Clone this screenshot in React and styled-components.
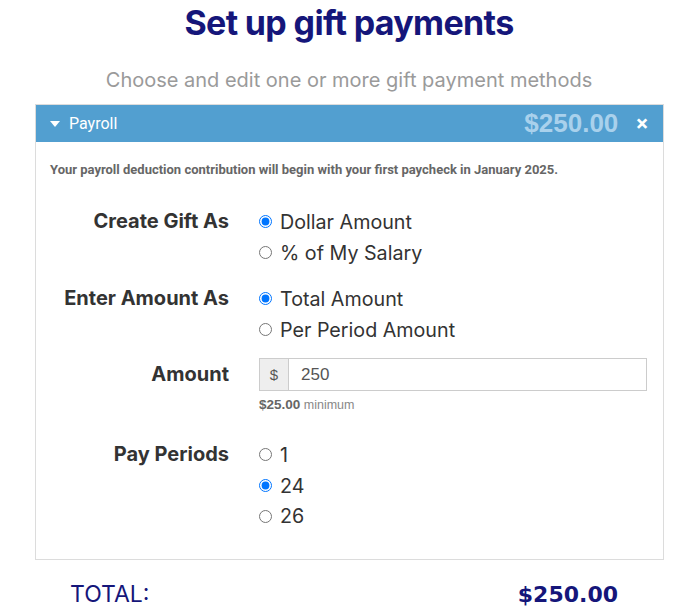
import React from "react";
import styled, { createGlobalStyle } from "styled-components";

const Global = createGlobalStyle`
  html, body { margin: 0; padding: 0; background: #fff; }
  body { font-family: Inter, "Noto Sans", sans-serif; }
`;

const Page = styled.div`
  width: 682px;
  padding-top: 2px;
`;

const Title = styled.h1`
  margin: 0;
  text-align: center;
  padding-left: 16px;
  font-family: Inter, sans-serif;
  font-weight: 700;
  font-size: 34px;
  line-height: 42px;
  letter-spacing: -0.65px;
  color: #15167a;
`;

const Subtitle = styled.p`
  margin: 24px 0 0;
  text-align: center;
  padding-left: 16px;
  font-family: Inter, sans-serif;
  font-size: 20px;
  line-height: 24px;
  color: #9a9a9a;
`;

const Panel = styled.section`
  margin: 12px 0 0 35px;
  width: 629px;
  box-sizing: border-box;
  border: 1px solid #dcdcdc;
`;

const PanelHeader = styled.div`
  display: flex;
  align-items: center;
  height: 37px;
  background: #529fd0;
  padding: 0 15px 0 14px;
  font-family: Roboto, sans-serif;
`;

const Caret = styled.span`
  width: 0;
  height: 0;
  border-left: 5px solid transparent;
  border-right: 5px solid transparent;
  border-top: 6px solid #fff;
  margin-right: 9px;
`;

const HeaderTitle = styled.span`
  flex: 1;
  color: #fff;
  font-size: 16px;
`;

const HeaderAmount = styled.span`
  color: #a9d1ec;
  font-family: "Liberation Sans", Arial, sans-serif;
  font-weight: 700;
  font-size: 26px;
  margin-right: 18px;
`;

const Close = styled.span`
  color: #fff;
  font-size: 22px;
  font-weight: 700;
  line-height: 1;
`;

const PanelBody = styled.div`
  padding: 20px 14px 28px;
`;

const Note = styled.p`
  margin: 0 0 29px;
  font-family: Roboto, sans-serif;
  font-weight: 700;
  font-size: 13px;
  line-height: 15px;
  color: #666;
`;

const Form = styled.div`
  display: grid;
  grid-template-columns: 179px 1fr;
  column-gap: 30px;
  row-gap: 15px;
`;

const Label = styled.div`
  text-align: right;
  font-family: Inter, sans-serif;
  font-weight: 700;
  font-size: 20px;
  line-height: ${(p) => p.$lh || 31}px;
  color: #333;
  margin-top: ${(p) => p.$mt || 0}px;
`;

const Options = styled.div`
  display: flex;
  flex-direction: column;
`;

const Option = styled.label`
  display: flex;
  align-items: center;
  height: 31px;
  font-family: Inter, sans-serif;
  font-size: 19.7px;
  color: #333;
  &:nth-child(3) { height: 30px; }
`;

const Radio = styled.input`
  margin: 0 8px 0 0;
  width: 13px;
  height: 13px;
`;

const AmountField = styled.div`
  margin-top: -2px;
`;

const InputGroup = styled.div`
  display: flex;
  height: 33px;
  width: 388px;
  box-sizing: border-box;
  border: 1px solid #ccc;
  font-family: "Liberation Sans", Arial, sans-serif;
  font-size: 17px;
`;

const Addon = styled.span`
  width: 28px;
  background: #eee;
  border-right: 1px solid #ccc;
  display: flex;
  align-items: center;
  justify-content: center;
  color: #555;
  font-size: 15px;
`;

const InputValue = styled.span`
  display: flex;
  align-items: center;
  padding-left: 12px;
  color: #555;
`;

const Hint = styled.div`
  margin-top: 7px;
  font-family: "Liberation Sans", Arial, sans-serif;
  font-size: 12.5px;
  line-height: 14px;
  color: #888;
  b { color: #666; font-size: 13.5px; }
`;

const Spacer = styled.div`
  height: 12px;
`;

const Total = styled.div`
  display: flex;
  justify-content: space-between;
  align-items: center;
  margin: 20px 0 0 70px;
  width: 548px;
  height: 28px;
  color: #15167a;
`;

const TotalLabel = styled.span`
  font-family: Inter, sans-serif;
  font-size: 23px;
`;

const TotalAmount = styled.span`
  font-family: "DejaVu Sans", Verdana, sans-serif;
  font-weight: 700;
  font-size: 22px;
`;

const Choice = ({ name, checked, children }) => (
  <Option>
    <Radio type="radio" name={name} defaultChecked={checked} />
    {children}
  </Option>
);

export default function App() {
  return (
    <Page>
      <Global />
      <Title>Set up gift payments</Title>
      <Subtitle>Choose and edit one or more gift payment methods</Subtitle>
      <Panel>
        <PanelHeader>
          <Caret />
          <HeaderTitle>Payroll</HeaderTitle>
          <HeaderAmount>$250.00</HeaderAmount>
          <Close>×</Close>
        </PanelHeader>
        <PanelBody>
          <Note>
            Your payroll deduction contribution will begin with your first paycheck in January 2025.
          </Note>
          <Form>
            <Label>Create Gift As</Label>
            <Options>
              <Choice name="gift" checked>Dollar Amount</Choice>
              <Choice name="gift">% of My Salary</Choice>
            </Options>
            <Label>Enter Amount As</Label>
            <Options>
              <Choice name="enter" checked>Total Amount</Choice>
              <Choice name="enter">Per Period Amount</Choice>
            </Options>
            <Label $lh={33} $mt={-2}>Amount</Label>
            <AmountField>
              <InputGroup>
                <Addon>$</Addon>
                <InputValue>250</InputValue>
              </InputGroup>
              <Hint>
                <b>$25.00</b> minimum
              </Hint>
              <Spacer />
            </AmountField>
            <Label>Pay Periods</Label>
            <Options>
              <Choice name="periods">1</Choice>
              <Choice name="periods" checked>24</Choice>
              <Choice name="periods">26</Choice>
            </Options>
          </Form>
        </PanelBody>
      </Panel>
      <Total>
        <TotalLabel>TOTAL:</TotalLabel>
        <TotalAmount>$250.00</TotalAmount>
      </Total>
    </Page>
  );
}
